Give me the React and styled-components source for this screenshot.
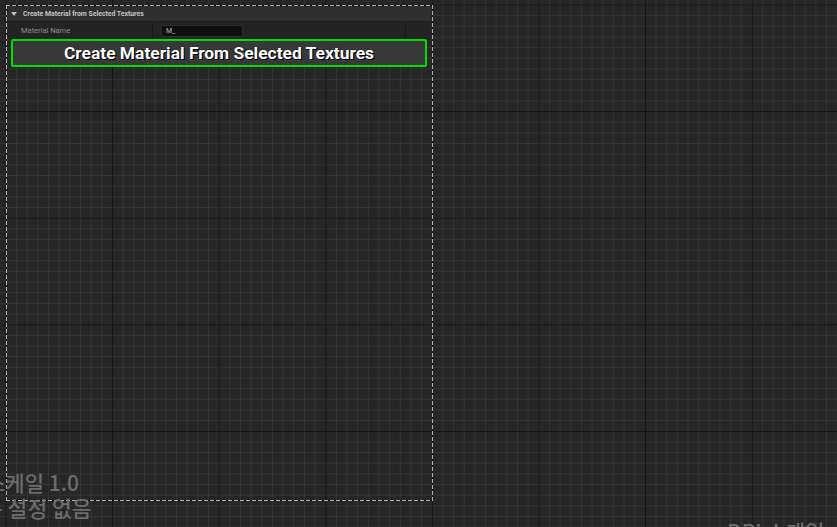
import React from "react";
import styled, { createGlobalStyle } from "styled-components";

const GlobalStyle = createGlobalStyle`
  html, body { margin: 0; padding: 0; background: #262626; }
  body { font-family: Roboto, "Noto Sans", sans-serif; }
`;

const Canvas = styled.div`
  position: relative;
  width: 837px;
  height: 527px;
  overflow: hidden;
  background-color: #262626;
  background-image:
    linear-gradient(90deg, #131313 1px, transparent 1px),
    linear-gradient(180deg, #131313 1px, transparent 1px),
    linear-gradient(90deg, #343434 1px, transparent 1px),
    linear-gradient(180deg, #343434 1px, transparent 1px);
  background-size: 106.6px 106.6px, 106.6px 106.6px, 10.66px 10.66px, 10.66px 10.66px;
  background-position: 5.5px 4.5px, 5.5px 4.5px, 5.5px 4.5px, 5.5px 4.5px;
`;

const dashH = "repeating-linear-gradient(90deg, #b4b4b4 0 4px, #101010 4px 6px)";
const dashV = "repeating-linear-gradient(180deg, #b4b4b4 0 4px, #101010 4px 6px)";

const Selection = styled.div`
  position: absolute;
  left: 6px;
  top: 5px;
  width: 427px;
  height: 496px;
  box-sizing: border-box;
  padding: 2px 2px 0 2px;
  background:
    ${dashH} left top / 100% 1px no-repeat,
    ${dashH} left bottom / 100% 1px no-repeat,
    ${dashV} left top / 1px 100% no-repeat,
    ${dashV} right top / 1px 100% no-repeat;
`;

const Panel = styled.div`
  display: flex;
  flex-direction: column;
`;

const Header = styled.div`
  height: 15px;
  display: flex;
  align-items: center;
  gap: 5px;
  padding-left: 3px;
  padding-bottom: 1px;
  box-sizing: border-box;
  background: #2f2f2f;
  border-bottom: 1px solid #1b1b1b;
  color: #c4c4c4;
  font-size: 6.85px;
  font-weight: 700;
`;

const Arrow = styled.span`
  width: 0;
  height: 0;
  border-left: 3px solid transparent;
  border-right: 3px solid transparent;
  border-top: 4px solid #bdbdbd;
  margin-right: 1px;
`;

const Row = styled.div`
  height: 17px;
  display: grid;
  grid-template-columns: 144px 253px 1fr;
  background: #232323;
`;

const Cell = styled.div`
  display: flex;
  align-items: center;
  padding-left: ${(p) => p.$pad || 0}px;
  border-left: ${(p) => (p.$divider ? "1px solid #191919" : "none")};
  color: #8e8e8e;
  font-size: 7.5px;
`;

const Input = styled.div`
  width: 82px;
  height: 12px;
  box-sizing: border-box;
  background: #0f0f0f;
  border: 1px solid #2c2c2c;
  border-radius: 1px;
  color: #b8b8b8;
  font-size: 7px;
  display: flex;
  align-items: center;
  padding-left: 4px;
`;

const ButtonWrap = styled.div`
  padding: 0 4px 0 3px;
`;

const BigButton = styled.button`
  width: 100%;
  height: 28px;
  box-sizing: border-box;
  border: 2px solid #00e000;
  border-radius: 2px;
  background: #383838;
  color: #ffffff;
  font-family: Roboto, "Noto Sans", sans-serif;
  font-weight: 700;
  font-size: 17.4px;
  text-shadow: 1px 1px 0 #000, 0 0 1px #000;
  padding: 0;
  display: flex;
  align-items: center;
  justify-content: center;
`;

const Overlay = styled.div`
  position: absolute;
  left: ${(p) => p.$x}px;
  top: ${(p) => p.$y}px;
  color: #6c6c6c;
  font-family: "Noto Sans CJK KR", "Noto Sans", sans-serif;
  font-weight: 500;
  font-size: 21px;
  line-height: 25px;
  white-space: nowrap;
`;

const Line = styled.div`
  margin-left: ${(p) => p.$shift || 0}px;
  font-size: ${(p) => p.$size || 21}px;
  height: 25px;
`;

export default function App() {
  return (
    <>
      <GlobalStyle />
      <Canvas>
        <Selection>
          <Panel>
            <Header>
              <Arrow />
              Create Material from Selected Textures
            </Header>
            <Row>
              <Cell $pad={13}>Material Name</Cell>
              <Cell $divider $pad={8}>
                <Input>M_</Input>
              </Cell>
              <Cell $divider />
            </Row>
            <ButtonWrap>
              <BigButton>Create Material From Selected Textures</BigButton>
            </ButtonWrap>
          </Panel>
        </Selection>
        <Overlay $x={-17} $y={470}>
          <Line $shift={3}>스케일 1.0</Line>
          <Line $size={21.5}>는 설정 없음</Line>
        </Overlay>
        <Overlay $x={727} $y={519}>DPI 스케일</Overlay>
      </Canvas>
    </>
  );
}
